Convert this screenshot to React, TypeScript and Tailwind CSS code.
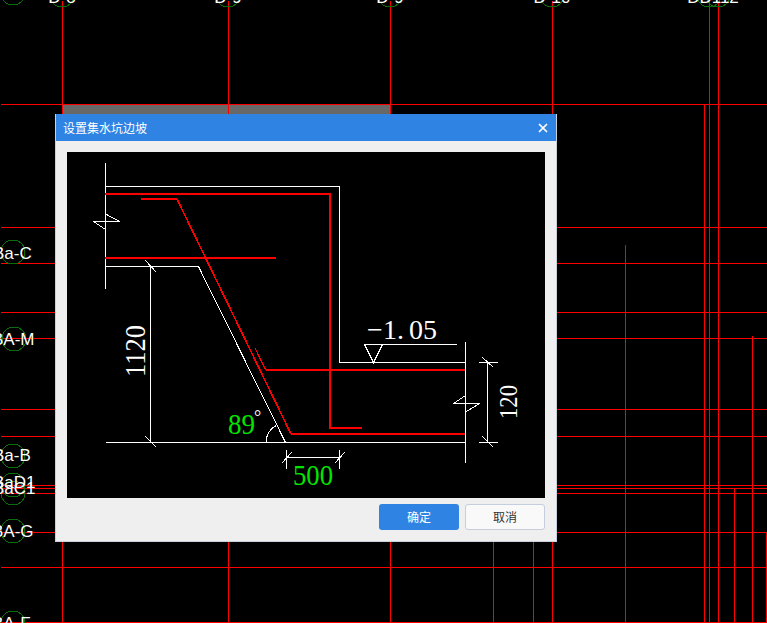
import React from "react";
import { X } from "lucide-react";

const SANS = "'Liberation Sans', sans-serif";
const SERIF = "'Liberation Serif', serif";

// background drawing: grid lines as [x1, y1, x2, y2]
const GRID_LINES = [
  [0, 104, 767, 104],
  [0, 227, 767, 227],
  [0, 263, 767, 263],
  [0, 312, 767, 312],
  [0, 338, 767, 338],
  [0, 409, 767, 409],
  [0, 436, 767, 436],
  [0, 485, 767, 485],
  [0, 488, 767, 488],
  [0, 493, 767, 493],
  [0, 532, 767, 532],
  [0, 567, 767, 567],
  [0, 622, 767, 622],
  [62, 0, 62, 623],
  [228, 0, 228, 623],
  [390, 0, 390, 623],
  [552, 0, 552, 623],
  [493, 500, 493, 623],
  [533, 500, 533, 623],
  [625, 244, 625, 623],
  [704, 104, 704, 623],
  [709, 0, 709, 623],
  [718, 0, 718, 623],
  [734, 488, 734, 623],
  [752, 335, 752, 623],
  [766, 532, 766, 623],
];

const BUBBLES = [
  [13, -7], [62, -5], [228, -5], [390, -5], [552, -5], [709, -5], [718, -5],
  [13, 252], [14, 339], [13, 456], [13, 485], [13, 493], [13, 531], [13, 623],
];

const LABELS: [string, number, number][] = [
  ["Ba-C", -7, 259],
  ["BA-M", -8, 345],
  ["Ba-B", -7, 461],
  ["BaD1", -7, 488],
  ["BaC1", -7, 494],
  ["BA-G", -8, 537],
  ["BA-F", -8, 629],
];

const TOP_LABELS: [string, number][] = [
  ["D-8", 62],
  ["D-9", 228],
  ["D-9", 390],
  ["D-10", 552],
  ["DD112", 713],
];

// section drawing, page coordinates
const WHITE_PATHS = [
  "M105 162V288",
  "M105 186H339V362H465",
  "M465 341V462",
  "M93 221H119M93 221L105 229M119 221L106 214",
  "M453 403H479M453 403L465 395M479 403L466 411",
  "M105 266H198L285 442",
  "M105 442H465",
  "M150 266V442M145 260L156 272M145 436L156 447",
  "M286 457H339M286 449V468M339 449V468M281 463L291 452M334 463L344 452",
  "M487 362V442M478 362H497M478 442H497M482 357L493 367M482 436L493 447",
  "M364 344H456M364 344L373 362L382 344",
  "M265.7 442A19 19 0 0 1 275.7 425",
];

function CadBackground() {
  return (
    <svg className="absolute inset-0" width={767} height={623} viewBox="0 0 767 623">
      <rect x={63} y={105} width={327} height={9} fill="#686868" />
      <g stroke="#ff0000" strokeWidth={1} shapeRendering="crispEdges">
        {GRID_LINES.map(([x1, y1, x2, y2], i) => (
          <line key={i} x1={x1 + 0.5} y1={y1 + 0.5} x2={x2 + 0.5} y2={y2 + 0.5} />
        ))}
      </g>
      <g fill="none" stroke="#0a6e0a" strokeWidth={1} shapeRendering="crispEdges">
        {BUBBLES.map(([cx, cy], i) => (
          <circle key={i} cx={cx} cy={cy} r={12} />
        ))}
      </g>
      <g fill="#ffffff" fontFamily={SANS} fontSize={17}>
        {LABELS.map(([label, x, y]) => (
          <text key={label} x={x} y={y}>{label}</text>
        ))}
        {TOP_LABELS.map(([label, x], i) => (
          <text key={i} x={x} y={3} textAnchor="middle">{label}</text>
        ))}
      </g>
    </svg>
  );
}

function SlopeDrawing() {
  return (
    <svg width={478} height={346} viewBox="67 152 478 346" className="block bg-black">
      <g fill="none" stroke="#ffffff" strokeWidth={1} shapeRendering="crispEdges" transform="translate(0.5 0.5)">
        {WHITE_PATHS.map((d, i) => (
          <path key={i} d={d} />
        ))}
      </g>
      <g fill="none" stroke="#ff0000" strokeWidth={2} shapeRendering="crispEdges">
        <path d="M105 194H330V428H362" />
        <path d="M105 258H276" />
        <path d="M265.5 370H465" />
        <path d="M291 434H465" />
        <path d="M141 199H177" />
        <path d="M177 199L291 434" strokeWidth={1.6} />
        <path d="M255 348L265.7 370" strokeWidth={1.2} />
      </g>

      <g fontFamily={SERIF} fill="#ffffff">
        <text
          transform="translate(145 377) rotate(-90)"
          fontSize={29}
          textLength={52}
          lengthAdjust="spacingAndGlyphs"
        >
          1120
        </text>
        <text
          transform="translate(517 419) rotate(-90)"
          fontSize={25}
          textLength={34}
          lengthAdjust="spacingAndGlyphs"
        >
          120
        </text>
        <text x="367 383 397 409 423" y={339} fontSize={28}>−1.05</text>
        <text x={254} y={423} fontSize={18}>°</text>
      </g>
      <g fontFamily={SERIF} fill="#00e600">
        <text x={228} y={434} fontSize={30} textLength={27} lengthAdjust="spacingAndGlyphs">89</text>
        <text x={293} y={485} fontSize={29} textLength={40} lengthAdjust="spacingAndGlyphs">500</text>
      </g>
    </svg>
  );
}

export default function App() {
  return (
    <div className="relative w-[767px] h-[623px] bg-black overflow-hidden">
      <CadBackground />

      {/* Dialog */}
      <div
        className="absolute left-[55px] top-[114px] w-[502px] h-[428px] bg-[#efefef] border-x border-b border-[#c8d0da] box-border"
        style={{ fontFamily: "'Noto Sans CJK SC', sans-serif" }}
      >
        <div className="h-[27px] bg-[#2e83e3] flex items-center justify-between pl-[7px] pr-[6px]">
          <span className="text-[12px] text-white leading-none">设置集水坑边坡</span>
          <X size={14} strokeWidth={3} className="text-white" />
        </div>
        <div className="pt-[11px] px-[11px]">
          <SlopeDrawing />
          <div className="mt-[6px] flex justify-end gap-[6px]">
            <button className="w-[80px] h-[26px] rounded-[3px] bg-[#2e83e3] text-[12px] text-white">
              确定
            </button>
            <button className="w-[80px] h-[26px] rounded-[3px] bg-[#f9f9f9] border border-[#c5cede] text-[12px] text-[#333333]">
              取消
            </button>
          </div>
        </div>
      </div>
    </div>
  );
}
